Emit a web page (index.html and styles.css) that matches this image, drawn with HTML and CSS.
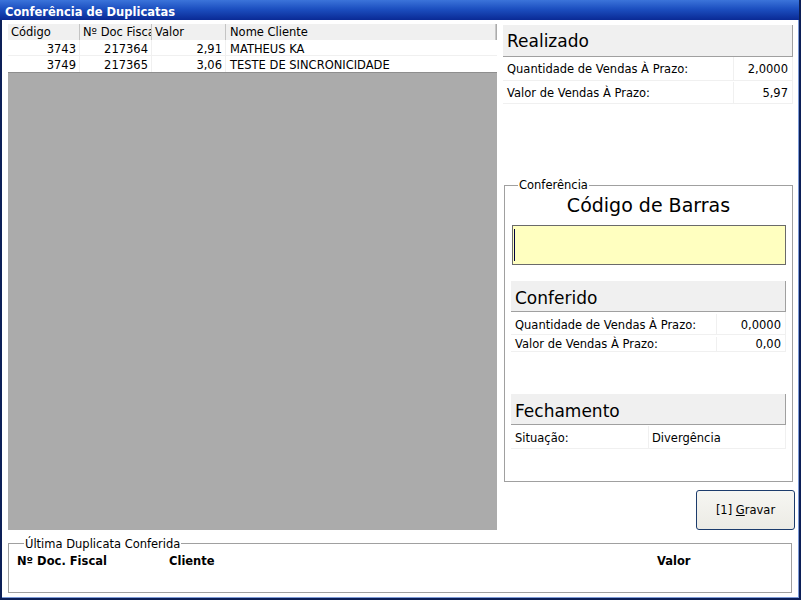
FILE: index.html
```html
<!DOCTYPE html>
<html lang="pt-BR">
<head>
<meta charset="utf-8">
<title>Conferência de Duplicatas</title>
<link rel="stylesheet" href="styles.css">
</head>
<body>
<div class="window">
  <div class="titlebar">Conferência de Duplicatas</div>
  <div class="body">
    <div class="main">
      <div class="grid">
        <div class="grow head">
          <div class="hc">Código</div>
          <div class="hc">Nº Doc Fiscal</div>
          <div class="hc">Valor</div>
          <div class="hc last">Nome Cliente</div>
        </div>
        <div class="grow">
          <div class="c num">3743</div>
          <div class="c num">217364</div>
          <div class="c num">2,91</div>
          <div class="c name">MATHEUS KA</div>
        </div>
        <div class="grow lastrow">
          <div class="c num">3749</div>
          <div class="c num">217365</div>
          <div class="c num">3,06</div>
          <div class="c name">TESTE DE SINCRONICIDADE</div>
        </div>
        <div class="gridfill"></div>
      </div>
      <div class="side">
        <div class="panel realizado">
          <div class="phead">Realizado</div>
          <div class="prow r1"><span class="lbl">Quantidade de Vendas À Prazo:</span><span class="val">2,0000</span></div>
          <div class="prow r2"><span class="lbl">Valor de Vendas À Prazo:</span><span class="val">5,97</span></div>
        </div>
        <fieldset class="conf">
          <legend>Conferência</legend>
          <div class="barcode-title">Código de Barras</div>
          <div class="barcode"><span class="caret"></span></div>
          <div class="panel sub conferido">
            <div class="phead">Conferido</div>
            <div class="prow c1"><span class="lbl">Quantidade de Vendas À Prazo:</span><span class="val">0,0000</span></div>
            <div class="prow c2"><span class="lbl">Valor de Vendas À Prazo:</span><span class="val">0,00</span></div>
          </div>
          <div class="panel sub fechamento">
            <div class="phead">Fechamento</div>
            <div class="prow f1"><span class="lbl">Situação:</span><span class="val left">Divergência</span></div>
          </div>
        </fieldset>
        <button class="btn">[1] <u>G</u>ravar</button>
      </div>
    </div>
    <fieldset class="last-dup">
      <legend>Última Duplicata Conferida</legend>
      <div class="ld-head">
        <span class="ld-doc">Nº Doc. Fiscal</span>
        <span class="ld-cli">Cliente</span>
        <span class="ld-val">Valor</span>
      </div>
    </fieldset>
  </div>
</div>
</body>
</html>
```

FILE: styles.css
```css
* { box-sizing: border-box; }
html, body { margin: 0; padding: 0; background: #ffffff; }
body {
  width: 801px;
  height: 600px;
  font-family: "DejaVu Sans", Verdana, sans-serif;
  font-size: 11.5px;
  color: #000;
  overflow: hidden;
}
.window {
  width: 801px;
  height: 600px;
  display: flex;
  flex-direction: column;
  background: #0c1f57;
}
.titlebar {
  height: 20px;
  flex: none;
  padding: 4px 0 0 5px;
  line-height: 16px;
  color: #fff;
  font-weight: bold;
  font-size: 11.5px;
  background: linear-gradient(#3b74da 0%, #1c4fc0 45%, #0a2a95 100%);
  border-right: 2px solid #0c1f57;
}
.body {
  flex: 1;
  margin: 0 2px 2px 2px;
  background: #fff;
  box-shadow: inset -1px -1px 0 #7d9ad6;
  padding: 4px 4px 0 6px;
  display: flex;
  flex-direction: column;
}
.main {
  display: flex;
  height: 506px;
  gap: 6px;
}
.grid {
  width: 489px;
  display: flex;
  flex-direction: column;
  background: #ababab;
}
.grow {
  display: grid;
  grid-template-columns: 72px 72px 74px 1fr;
  background: #fff;
  height: 16px;
  border-bottom: 1px solid #f0f0f0;
}
.grow.head {
  background: #f0f0f0;
  border-bottom: 0;
  margin-right: 1px;
  border-right: 1px solid #c8c8c8;
}
.grow.lastrow { border-bottom: 1px solid #8e8e8e; height: 17px; }
.hc {
  padding: 1px 0 0 3px;
  line-height: 15px;
  white-space: nowrap;
  overflow: hidden;
  border-right: 1px solid #c4c4c4;
}
.hc.last { border-right: 0; padding-left: 4px; }
.c {
  padding-top: 3px;
  line-height: 13px;
  white-space: nowrap;
  border-right: 1px solid #f0f0f0;
}
.c.num { text-align: right; padding-right: 3px; }
.c.name { padding-left: 4px; border-right: 0; }
.gridfill { flex: 1; background: #ababab; }

.side {
  flex: 1;
  display: flex;
  flex-direction: column;
}
.panel { background: #fff; }
.realizado { margin: 1px 2px 0 0; }
.phead {
  height: 32px;
  background: #f0f0f0;
  border-bottom: 1px solid #a0a0a0;
  border-right: 1px solid #a0a0a0;
  font-size: 17px;
  padding: 1px 0 0 4px;
  line-height: 31px;
}
.prow {
  display: flex;
  border-bottom: 1px solid #f0f0f0;
  border-right: 1px solid #f0f0f0;
}
.lbl { flex: 1; padding-left: 4px; white-space: nowrap; }
.val {
  border-left: 1px solid #f0f0f0;
  text-align: right;
  padding-right: 4px;
  white-space: nowrap;
}
.realizado .val { width: 59px; }
.r1 { height: 24px; line-height: 25px; }
.r2 { height: 23px; padding-top: 1px; line-height: 23px; }

.conf {
  margin: 74px 2px 0 1px;
  padding: 0 6px 0 6px;
  height: 307px;
  border: 1px solid #a0a0a0;
  min-width: 0;
}
.conf legend, .last-dup legend {
  padding: 0 1px;
  margin-left: 7px;
  font-size: 11.5px;
  line-height: 14px;
}
.last-dup legend { padding-top: 1px; }
.barcode-title {
  text-align: center;
  font-size: 19px;
  line-height: 22px;
  margin-top: 2px;
}
.barcode {
  margin: 9px 0 0 1px;
  height: 40px;
  background: #ffffc0;
  border: 1px solid #6a6a6a;
  padding: 3px 0 0 1px;
}
.caret {
  display: block;
  width: 1px;
  height: 32px;
  background: #000040;
}
.sub .phead { height: 31px; line-height: 30px; padding-top: 2px; }
.conferido { margin-top: 16px; }
.conferido .val { width: 69px; }
.c1 { height: 23px; padding-top: 2px; line-height: 22px; }
.c2 { height: 17px; padding-top: 2px; line-height: 15px; }
.fechamento { margin-top: 42px; }
.f1 { height: 24px; padding-top: 1px; line-height: 24px; }
.val.left { text-align: left; width: 137px; padding-left: 3px; }

.btn {
  margin: 8px 0 0 auto;
  width: 99px;
  height: 40px;
  border: 1px solid #1c3c6c;
  border-radius: 3px;
  background: linear-gradient(#f6f6f2, #ecebe5);
  font-family: "DejaVu Sans", Verdana, sans-serif;
  font-size: 11.5px;
  color: #000;
  padding: 0;
}

.last-dup {
  margin: 6px 3px 0 0;
  padding: 0 8px;
  height: 57px;
  border: 1px solid #a0a0a0;
  min-width: 0;
}
.ld-head {
  display: flex;
  font-weight: bold;
  font-size: 11.5px;
  line-height: 15px;
  margin-top: 3px;
}
.ld-doc { width: 152px; }
.ld-cli { width: 488px; }
```
